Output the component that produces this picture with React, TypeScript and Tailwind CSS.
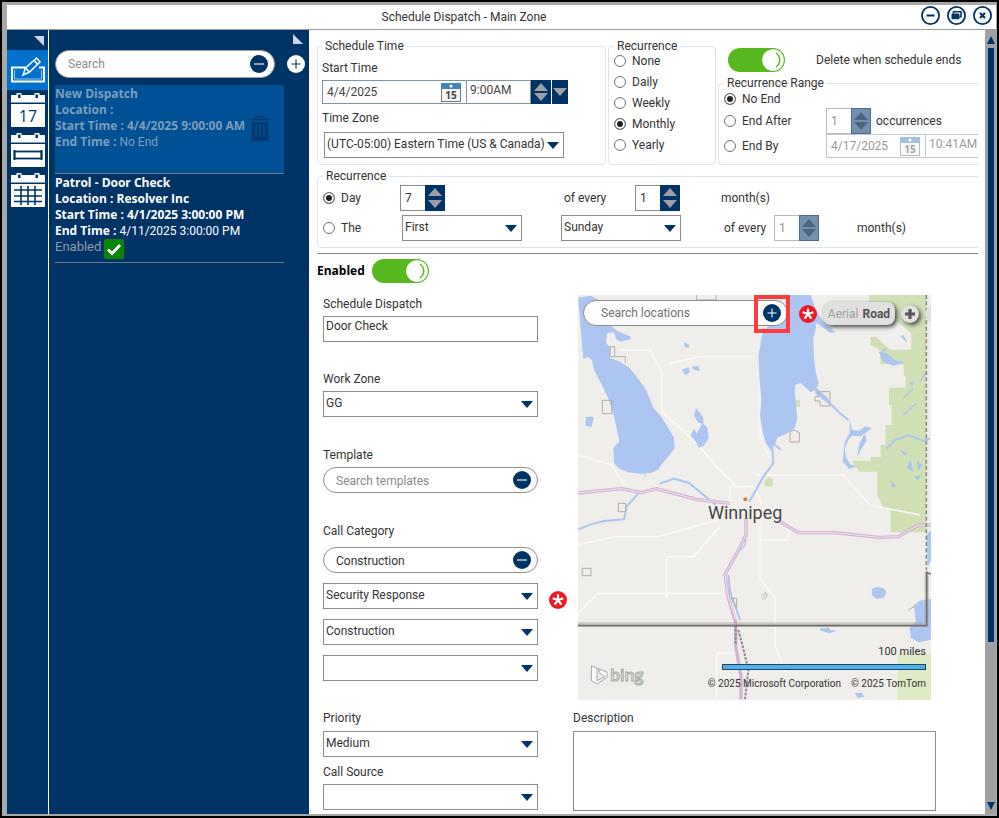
import { useState, type ReactNode } from 'react';
import { clsx } from 'clsx';

// ─── Small pieces ─────────────────────────────────────────────────────────────
function Caret({ className }: { className?: string }) {
  return (
    <svg viewBox="0 0 12 7" className={clsx('h-[7px] w-3', className)} aria-hidden="true">
      <path d="M0 0h12L6 7z" fill="currentColor" />
    </svg>
  );
}

function Select({ label, id, options, className }: { label?: string; id?: string; options: string[]; className?: string }) {
  return (
    <div className={clsx('relative', className)}>
      <select
        id={id}
        aria-label={label}
        className="block h-[26px] w-full appearance-none rounded-none border border-[#8c8c8c] bg-white pr-4 pb-[2px] pl-[2px] outline-none"
      >
        {options.map((o) => (
          <option key={o}>{o}</option>
        ))}
      </select>
      <Caret className="pointer-events-none absolute top-[10px] right-[5px] text-[#003366]" />
    </div>
  );
}

function SpinButtons({ className, disabled }: { className?: string; disabled?: boolean }) {
  return (
    <div
      className={clsx(
        'flex w-5 flex-col items-center justify-evenly',
        disabled ? 'border border-[#4a6c8e] bg-[#7391af] text-[#4a6683]' : 'bg-[#003366] text-[#9e9ea3]',
        className,
      )}
    >
      <button type="button" aria-label="Increase" disabled={disabled}>
        <svg viewBox="0 0 14 8" className="block h-2 w-[14px]"><path d="M0 8h14L7 0z" fill="currentColor" /></svg>
      </button>
      <button type="button" aria-label="Decrease" disabled={disabled}>
        <svg viewBox="0 0 14 8" className="block h-2 w-[14px]"><path d="M0 0h14L7 8z" fill="currentColor" /></svg>
      </button>
    </div>
  );
}

function Spinner({ label, value, disabled }: { label: string; value: string; disabled?: boolean }) {
  return (
    <div className="flex h-[26px] w-[45px] shrink-0">
      <input
        aria-label={label}
        defaultValue={value}
        disabled={disabled}
        className="w-[25px] border border-r-0 border-[#8c8c8c] bg-white pl-1 outline-none disabled:border-[#bababa] disabled:text-[#8f8f8f]"
      />
      <SpinButtons disabled={disabled} />
    </div>
  );
}

function Radio({ name, label, checked }: { name: string; label: string; checked?: boolean }) {
  return (
    <label className="flex items-center gap-[6px]">
      <input
        type="radio"
        name={name}
        defaultChecked={checked}
        className="size-3 appearance-none rounded-full border border-[#707070] bg-white checked:bg-[#222222] checked:shadow-[inset_0_0_0_2px_white]"
      />
      {label}
    </label>
  );
}

function Toggle({ label }: { label: string }) {
  const [on, setOn] = useState(true);
  return (
    <button
      type="button"
      role="switch"
      aria-checked={on}
      aria-label={label}
      onClick={() => setOn(!on)}
      className={clsx('flex h-6 w-[57px] items-center rounded-full', on ? 'justify-end bg-[#58b820]' : 'bg-[#9e9ea3]')}
    >
      <svg viewBox="0 0 24 24" className="size-6">
        <circle cx="12" cy="12" r="10.8" fill="#fff" />
        <path d="M15 5a8.500 8.500 0 0 1 0 14" fill="none" stroke="#58b820" strokeWidth="1.500" />
      </svg>
    </button>
  );
}

function DateIcon() {
  return (
    <svg viewBox="0 0 20 19" className="h-[19px] w-5 shrink-0" aria-hidden="true">
      <rect x="0.5" y="0.5" width="19" height="18" fill="#f4f4f4" stroke="#767676" />
      <rect width="20" height="6" fill="#4583b8" />
      <circle cx="10" cy="3" r="1.5" fill="#fff" />
      <text x="10" y="16" textAnchor="middle" fontSize="10" className="font-['Open_Sans',sans-serif] font-bold" fill="#444">15</text>
    </svg>
  );
}

function DateBox({ label, value, className }: { label: string; value: string; className?: string }) {
  return (
    <div className={clsx('flex h-6 shrink-0 items-center border border-[#7f93ab] bg-white pr-[5px] pl-1', className)}>
      <input aria-label={label} defaultValue={value} className="w-0 min-w-0 flex-1 outline-none" />
      <button type="button" aria-label="Open calendar">
        <DateIcon />
      </button>
    </div>
  );
}

function RoundIcon({ sign, className }: { sign: 'plus' | 'minus'; className?: string }) {
  return (
    <svg viewBox="0 0 18 18" className={clsx('size-[18px]', className)} aria-hidden="true">
      <circle cx="9" cy="9" r="9" fill="currentColor" />
      <path d={sign === 'plus' ? 'M4.500 9h9M9 4.500v9' : 'M4 9h10'} className="stroke-(--sign)" strokeWidth="1.100" />
    </svg>
  );
}

function Required() {
  return (
    <svg viewBox="0 0 18 18" className="size-[18px] shrink-0" role="img" aria-label="Required">
      <circle cx="9" cy="9" r="9" fill="#ed1c24" />
      <path d="M9 9V3.400M9 9l5.300-1.700M9 9l3.400 4.600M9 9l-3.400 4.600M9 9L3.700 7.300" stroke="#fff" strokeWidth="2.200" />
    </svg>
  );
}

function Group({ title, className, children }: { title: string; className?: string; children: ReactNode }) {
  return (
    <fieldset className={clsx('min-w-0 rounded border border-[#dbe5ee]', className)}>
      <legend className="px-[3px] leading-4">{title}</legend>
      {children}
    </fieldset>
  );
}

// ─── Title bar ────────────────────────────────────────────────────────────────
function TitleBar() {
  return (
    <header className="flex h-[25px] items-center border-b border-[#9a9a9a] bg-white pr-1">
      <h1 className="flex-1 text-center">Schedule Dispatch - Main Zone</h1>
      <div className="flex gap-[7px] pb-1 text-[#003366]">
        <button type="button" aria-label="Minimize">
          <svg viewBox="0 0 19 19" className="block size-[19px]" fill="none" stroke="currentColor">
            <circle cx="9.5" cy="9.5" r="8.6" strokeWidth="1.8" />
            <path d="M5.500 9.500h8" strokeWidth="2" />
          </svg>
        </button>
        <button type="button" aria-label="Restore">
          <svg viewBox="0 0 19 19" className="block size-[19px]" fill="none" stroke="currentColor">
            <circle cx="9.500" cy="9.500" r="8.600" strokeWidth="1.800" />
            <path d="M6.500 7.500V5.800h7.500v5h-1.500" strokeWidth="1.600" />
            <rect x="4.500" y="7.500" width="8" height="5.800" rx="1" fill="currentColor" stroke="none" />
          </svg>
        </button>
        <button type="button" aria-label="Close">
          <svg viewBox="0 0 19 19" className="block size-[19px]" fill="none" stroke="currentColor">
            <circle cx="9.500" cy="9.500" r="8.600" strokeWidth="1.800" />
            <path d="M7 7l5 5M12 7l-5 5" strokeWidth="2.200" />
          </svg>
        </button>
      </div>
    </header>
  );
}

// ─── Icon rail ────────────────────────────────────────────────────────────────
function CalendarFrame({ children }: { children: ReactNode }) {
  return (
    <svg viewBox="0 0 36 36" className="block size-9">
      <path d="M1 3h5.500V1h5v2h13V1h5v2H35v7.500H1z" fill="#fff" />
      <path d="M8 2.500h2.500V6H8zM25.500 2.500H28V6h-2.500z" fill="#003366" />
      <path d="M1 12h34v23H1z" fill="#fff" />
      {children}
    </svg>
  );
}

function Rail() {
  return (
    <nav className="flex w-[42px] shrink-0 flex-col items-center border-r border-white bg-[#003366]">
      <svg viewBox="0 0 10 10" className="mt-[6px] mr-1 mb-1 size-[10px] self-end" aria-hidden="true">
        <path d="M0 0h10v10z" fill="#ccd6e0" />
      </svg>
      <button type="button" aria-label="Schedule" className="flex h-10 w-full items-center justify-center bg-[#0072ce]">
        <svg viewBox="0 0 36 30" className="h-[30px] w-9" fill="none" stroke="#fff">
          <path d="M15 12.500H2v14h32v-14h-5" strokeWidth="2" />
          <path d="M4.500 15v9h27v-9" strokeWidth="0.600" />
          <path d="M13 20l2.500-7L26.500 3l3.500 4L19.500 17zM15.500 13l4 4M24 5.200l3.500 4" strokeWidth="1.500" />
        </svg>
      </button>
      <div className="flex flex-col items-center gap-1 pt-[2px]">
        <button type="button" aria-label="Day">
          <CalendarFrame>
            <text x="18" y="29.500" textAnchor="middle" fontSize="16" className="font-['Open_Sans',sans-serif]" fill="#003366">17</text>
          </CalendarFrame>
        </button>
        <button type="button" aria-label="Week">
          <CalendarFrame>
            <rect x="4.500" y="19.500" width="27" height="7" fill="none" stroke="#003366" strokeWidth="1.800" />
            <path d="M4.500 18v10M31.500 18v10" stroke="#003366" strokeWidth="1.800" />
          </CalendarFrame>
        </button>
        <button type="button" aria-label="Month">
          <CalendarFrame>
            <path d="M4 18h28M4 24h28M4 29.500h28M11 14v19M18 14v19M25 14v19" stroke="#003366" strokeWidth="1.600" />
          </CalendarFrame>
        </button>
      </div>
    </nav>
  );
}

// ─── Dispatch list ────────────────────────────────────────────────────────────
function DispatchList() {
  return (
    <aside className="w-[260px] shrink-0 bg-[#003366] pl-[6px] text-white">
      <svg viewBox="0 0 10 10" className="mt-1 mr-[6px] ml-auto size-[10px]" aria-hidden="true">
        <path d="M0 0v10h10z" fill="#ccd6e0" />
      </svg>
      <div className="mt-[6px] flex items-center gap-3">
        <label className="flex h-7 w-[220px] items-center rounded-full border border-[#9a9a9a] bg-white pr-[6px] pl-3">
          <input
            type="text"
            aria-label="Search dispatches"
            placeholder="Search"
            className="w-0 flex-1 text-[#222222] outline-none placeholder:text-[#8a8a8a]"
          />
          <RoundIcon sign="minus" className="text-[#003366] [--sign:#fff]" />
        </label>
        <button type="button" aria-label="Add dispatch">
          <RoundIcon sign="plus" className="block text-white [--sign:#003366]" />
        </button>
      </div>

      <ul className="mt-[7px] mr-[25px] font-['Open_Sans','Noto_Sans',sans-serif] leading-4 font-bold">
        <li className="flex h-[89px] items-start justify-between border-b border-[#6b7a88] bg-[#005096] pt-px text-[#7d9dbb]">
          <div className="whitespace-nowrap">
            <p>New Dispatch</p>
            <p>Location :</p>
            <p>Start Time : 4/4/2025 9:00:00 AM</p>
            <p>End Time : <span className="font-['Roboto',sans-serif] font-normal">No End</span></p>
          </div>
          <button type="button" aria-label="Delete dispatch" className="mt-[29px] mr-3">
            <svg viewBox="0 0 24 27" className="block h-[27px] w-6" fill="none" stroke="#00386f">
              <path d="M8 4V1.500h8V4M1 4.500h22" strokeWidth="1.500" />
              <path d="M3.500 7h17v19h-17z" fill="#00386f" stroke="none" />
              <path d="M8 9v13M12 9v13M16 9v13" stroke="#005096" strokeWidth="1.300" />
            </svg>
          </button>
        </li>
        <li className="border-b border-[#6b7a88] pt-px whitespace-nowrap">
          <p>Patrol - Door Check</p>
          <p>Location : Resolver Inc</p>
          <p>Start Time : 4/1/2025 3:00:00 PM</p>
          <p>End Time : <span className="font-['Roboto',sans-serif] font-normal">4/11/2025 3:00:00 PM</span></p>
          <p className="flex h-[23px] items-start gap-[3px] font-['Roboto',sans-serif] text-[13px] font-normal text-[#8f9aa6]">
            Enabled
            <svg viewBox="0 0 20 20" className="size-5" role="img" aria-label="Yes">
              <rect width="20" height="20" rx="2" fill="#078507" />
              <path d="M4 10.500l4 4 8-8.500" fill="none" stroke="#fff" strokeWidth="2.800" />
            </svg>
          </p>
        </li>
      </ul>
    </aside>
  );
}

// ─── Schedule settings ────────────────────────────────────────────────────────
function ScheduleTime() {
  return (
    <Group title="Schedule Time" className="w-[289px] shrink-0 pb-[6px] pl-1">
      <div className="mt-[6px] leading-4">Start Time</div>
      <div className="mt-1 flex text-[#444444]">
        <DateBox label="Start date" value="4/4/2025" className="w-[145px]" />
        <input
          aria-label="Start time"
          defaultValue="9:00AM"
          className="h-6 w-16 border border-l-0 border-[#7f93ab] bg-white pb-1 pl-[3px] outline-none"
        />
        <SpinButtons className="h-6" />
        <button type="button" aria-label="Pick start time" className="ml-px flex h-6 w-4 items-center justify-center bg-[#003366] text-[#9e9ea3]">
          <svg viewBox="0 0 14 8" className="h-2 w-[14px]"><path d="M0 0h14L7 8z" fill="currentColor" /></svg>
        </button>
      </div>
      <label htmlFor="time-zone" className="mt-[6px] mb-[6px] block leading-4">Time Zone</label>
      <Select id="time-zone" options={['(UTC-05:00) Eastern Time (US & Canada)']} className="ml-[2px] w-60" />
    </Group>
  );
}

function RecurrenceRange() {
  return (
    <div className="min-w-0 flex-1 overflow-hidden">
      <div className="flex items-center gap-[31px] pt-[10px] pl-[10px]">
        <Toggle label="Delete when schedule ends" />
        <span className="whitespace-nowrap">Delete when schedule ends</span>
      </div>
      <Group title="Recurrence Range" className="mt-[3px] rounded-r-none border-r-0 pb-[6px] pl-[5px]">
        <div className="h-[17px]"><Radio name="range" label="No End" checked /></div>
        <div className="flex h-[26px] items-center">
          <div className="w-[102px]"><Radio name="range" label="End After" /></div>
          <Spinner label="Occurrences" value="1" disabled />
          <span className="ml-[5px]">occurrences</span>
        </div>
        <div className="flex h-6 items-center">
          <div className="w-[102px] shrink-0"><Radio name="range" label="End By" /></div>
          <div className="flex min-w-0 flex-1 opacity-50">
            <DateBox label="End date" value="4/17/2025" className="w-[100px]" />
            <input
              aria-label="End time"
              defaultValue="10:41AM"
              className="h-6 w-0 flex-1 border-y border-[#7f93ab] bg-white pb-1 pl-[3px] outline-none"
            />
          </div>
        </div>
      </Group>
    </div>
  );
}

function RecurrencePattern() {
  return (
    <Group title="Recurrence" className="mt-[3px] rounded-r-none border-r-0 pl-[5px]">
      <div className="mt-px grid grid-cols-[77px_160px_75px_86px_1fr] items-center">
        <Radio name="pattern" label="Day" checked />
        <Spinner label="Day of month" value="7" />
        <span className="pl-1">of every</span>
        <Spinner label="Every months" value="1" />
        <span>month(s)</span>
      </div>
      <div className="mt-1 mb-[6px] flex items-center">
        <div className="w-[79px]"><Radio name="pattern" label="The" /></div>
        <Select label="Week of month" options={['First']} className="w-[120px]" />
        <Select label="Weekday" options={['Sunday']} className="ml-[39px] w-[120px]" />
        <span className="ml-[43px] w-[50px]">of every</span>
        <Spinner label="Every months" value="1" disabled />
        <span className="ml-[38px]">month(s)</span>
      </div>
    </Group>
  );
}

// ─── Map ──────────────────────────────────────────────────────────────────────
function MapArt() {
  return (
    <svg viewBox="24 30 1059 1215" preserveAspectRatio="xMidYMid slice" className="absolute inset-0 size-full" aria-hidden="true">
      <rect x="24" y="30" width="1059" height="1215" fill="#efeeea" />
      {/* parks */}
      <g fill="#d0e0b4">
        <path d="M898 30h171v712H962V672h-20l-20-40v-72h-55l-20-32h55v-12h30v-36h15v-60h18v-60h-8v-52h50v-34h-6v-36h-70v-40l-10-8-20-10v-24h18l40 38h65v-50l-50-40-40-40h-35z" />
        <path d="M600 140l45-30 5 30-28 30-18-8zM672 345h18v20h-18zM582 590l15-14 12 8-3 22-22-4z" />
        <path d="M983 1105h100v140H983z" fill="#deebc4" />
      </g>
      {/* faint roads */}
      <g fill="none" stroke="#f9f8f6" strokeWidth="5">
        <path d="M150 195h90l35 65v120l100 90 70 80 60 60M300 235l90-20h160M570 240v220l30 60M560 570h260l80 90 150 30M24 510l100 30 40 60M24 780l110-25h130l180-50M290 940V815h80l80-90M24 985l60-60h370M570 700v180l45 60v140l30 80M440 1240v-135h60M570 765h80l15-50M480 655v-50h70l25 50" />
      </g>
      {/* lakes */}
      <g fill="#acc6f1">
        <path d="M24 38l38-6 40 22 14 14-22 10 16 22-10 14 20 6 22 18 38 16 2 8-30 8-12-6-8-22-20 2-4 30 14 14-2 30 30 12 28 18 30 38 22 32 20 50 24 28 18 28 20 34 2 32-18 24-16 18-16 22-22 10-30 2-38-4-28-12-14-16-2-46 18-18-6-30-10-46-16-52-22-46-22-40-6-30-12-10-14 6z" />
        <path d="M660 30h62l14 40 2 58-8 30 2 62 6 46 8 30-10 18-14 8-30-28-16 6-2 18 4 40 4 42-8 30-28 18-24 10-8 22-12 14-14-20-10-32-8-50 4-50-6-62-2-70 10-60 18-26 6-22 36-20 18-22z" />
        <path d="M728 60l30 48 40 36-20-2-44-32zM378 368l22 30v20l-16-6-12-20zM372 430l8 16 18-32 14 14 4 32-16 24-14 4-10-20-14-16zM342 172l14 6 2 10-14-2zM335 255l20-8 5 15-14 8zM365 245l20-3 4 15-16-2zM48 395h22v10l-6 22-18-6zM190 518l44 2 16-22 16-6-8 34-30 8-3 44-8-46z" />
        <path d="M735 305l40 35 5 20-44-34zM838 400l8 34 20 4 20-14 20 6-20 14-14 10-26-2-10 10-12 30 4 24 12 22 20 6-22 8-20-22 6-58 16-30-2-40zM884 445l6 22-16 24-12 24 6-38zM926 200l24 4 24 22 34 6-40 10-30-14z" />
        <path d="M905 912l16-6 20 4 8 12-8 16-22 4-14-12zM1032 960l20-14 31-4v122l-36 8-24-14-4-30 18-16zM750 1030h20l2-8 8 12 20 4-22 7-26-8zM855 1225l20-2 8 12-20 3z" />
        <path d="M960 585l18 18-10 5zM1010 548l12-26 8 40zM1040 525l18 16-14 18zM1030 575l24-5-8 16zM1070 750l13-15v90l-10 20zM990 495l24 10-9 8zM1000 150l14 24-22-18zM1020 295l14-8-8 18z" />
      </g>
      {/* rivers */}
      <g fill="none" stroke="#acc6f1" strokeWidth="6">
        <path d="M600 470l8 30 2 35-30 40-25 45-18 30M615 480l18 14M775 350l30 30 30 25M270 596l42-15 45 13 30 25 50 40M205 625l-35 40-8 38-60 5-40 10-38 16M475 870l5 50 20 55 10 30M950 490l25-25 40-15 45 18 20-8M905 60l50 45" />
        <path d="M1000 340l30-30M930 205l20-15M1000 390l40-35M1050 290l20-30M530 690l-4 90-30 30" strokeWidth="4" />
      </g>
      {/* highways */}
      <g fill="none" strokeLinejoin="round">
        <path
          d="M24 624l130-13 60 12 45-12 120 32 100 12M630 710l55 33h110l130 14 60-2 60-35h38M528 700v50l-25 50-38 68 10 70 22 75v70l16 90v70"
          stroke="#d3b3d3"
          strokeWidth="10"
        />
        <path
          d="M24 624l130-13 60 12 45-12 120 32 100 12M630 710l55 33h110l130 14 60-2 60-35h38M528 700v50l-25 50-38 68 10 70 22 65"
          stroke="#f3e6f3"
          strokeWidth="3"
        />
        <path d="M505 1035l16 60 14 60-10 90M497 1020v60" stroke="#8f8596" strokeWidth="6" strokeDasharray="8 4" />
      </g>
      {/* town outlines */}
      <g fill="none" stroke="#b5aca5" strokeWidth="3">
        <path d="M380 30v15h58V30M120 185v30h46v18M120 185h14v30M97 346h28v40H97zM735 335h12v-15h33v43h-30v-15h-15zM660 440l12-5 16 8v28h-28zM145 655h22v25h-22zM37 850h26v22H37zM483 940h17v30zM575 935l12-12 4 10-14 12M1015 975l20-12" />
      </g>
      {/* province border */}
      <path d="M1069 30v825" stroke="#8b8b85" strokeWidth="5" strokeDasharray="12 7" />
      <path d="M24 1018h1046V862" fill="none" stroke="#a5a5a0" strokeWidth="13" opacity="0.5" />
      <path d="M24 1022h1046V862l13 6" fill="none" stroke="#6f6f6b" strokeWidth="5" />
      <circle cx="526" cy="643" r="6" fill="#e0763a" />
      {/* bing mark */}
      <path
        d="M64 1142l17 7v38l24-12-14-8-6-16 26 10v16l-30 20-17-10z"
        fill="#fafafa"
        stroke="#a8a8a8"
        strokeWidth="3"
        strokeLinejoin="round"
      />
    </svg>
  );
}

function LocationMap() {
  return (
    <div className="relative mx-[5px] h-[405px] overflow-hidden">
      <MapArt />
      <span className="absolute top-[204px] left-[130px] text-lg text-[#444444] [text-shadow:0_0_2px_white]">Winnipeg</span>
      <span className="absolute top-[370px] left-8 font-['Open_Sans',sans-serif] text-base leading-5 font-semibold text-[#efefef] [-webkit-text-stroke:1px_#a8a8a8]">bing</span>

      <label className="absolute top-[5px] left-[5px] flex h-[26px] w-[205px] items-center rounded-full border border-[#8c8c8c] bg-white pr-[6px] pl-[17px]">
        <input type="text" aria-label="Search locations" placeholder="Search locations" className="w-0 flex-1 outline-none placeholder:text-[#707070]" />
        <RoundIcon sign="plus" className="text-[#003366] [--sign:#fff]" />
      </label>
      <div className="absolute top-0 left-[176px] h-[38px] w-9 border-4 border-[#ff3b3b]" />

      <div className="absolute top-[7px] left-[221px] flex items-center gap-[6px]">
        <Required />
        <div className="flex h-[23px] w-[72px] shrink-0 items-center justify-center gap-1 rounded-lg bg-[#e0e0de] shadow-[2px_2px_4px_#444444]">
          <button type="button" className="text-[#a0a0a0]">Aerial</button>
          <button type="button" className="font-bold text-[#555555]">Road</button>
        </div>
        <button type="button" aria-label="Zoom in" className="flex size-[18px] shrink-0 items-center justify-center rounded-full bg-[#e0e0de] shadow-[2px_2px_4px_#444444]">
          <svg viewBox="0 0 10 10" className="size-[10px]"><path d="M5 0v10M0 5h10" stroke="#555" strokeWidth="3.200" /></svg>
        </button>
        <button type="button" aria-label="Zoom out" className="size-[18px] shrink-0 rounded-full bg-[#e0e0de]" />
      </div>

      <div className="absolute right-[5px] bottom-[8px] flex flex-col items-end leading-4 whitespace-nowrap">
        <span className="text-[11px]">100 miles</span>
        <div className="mt-1 h-[6px] w-[204px] border border-[#33414d] bg-[#45b4f5]" />
        <div className="mt-[6px] flex gap-[10px] text-[10px]">
          <span>© 2025 Microsoft Corporation</span>
          <span>© 2025 TomTom</span>
        </div>
      </div>
    </div>
  );
}

// ─── Dispatch form ────────────────────────────────────────────────────────────
function PillSearch({ id, value, placeholder }: { id: string; value?: string; placeholder?: string }) {
  return (
    <div className="flex h-[26px] w-[215px] items-center rounded-full border border-[#8c8c8c] bg-white pr-[6px] pl-3">
      <input
        id={id}
        type="text"
        defaultValue={value}
        placeholder={placeholder}
        className="w-0 flex-1 pt-[2px] outline-none placeholder:text-[#8a8a8a]"
      />
      <RoundIcon sign="minus" className="text-[#003366] [--sign:#fff]" />
    </div>
  );
}

function DispatchForm() {
  return (
    <div className="flex pt-3 pr-[49px] pb-[3px] pl-[14px]">
      <div className="w-[250px] shrink-0 pt-px">
        <label htmlFor="dispatch" className="mb-1 block leading-4">Schedule Dispatch</label>
        <input
          id="dispatch"
          defaultValue="Door Check"
          className="block h-[26px] w-[215px] border border-[#8c8c8c] bg-white pb-[6px] pl-[2px] outline-none"
        />
        <label htmlFor="zone" className="mt-[29px] mb-1 block leading-4">Work Zone</label>
        <Select id="zone" options={['GG']} className="w-[215px]" />
        <label htmlFor="template" className="mt-[30px] mb-1 block leading-4">Template</label>
        <PillSearch id="template" placeholder="Search templates" />
        <label htmlFor="category" className="mt-[30px] mb-2 block leading-4">Call Category</label>
        <PillSearch id="category" value="Construction" />
        <div className="mt-[10px] flex items-end gap-[11px]">
          <Select label="Call category level 1" options={['Security Response']} className="w-[215px]" />
          <Required />
        </div>
        <Select label="Call category level 2" options={['Construction']} className="mt-[10px] w-[215px]" />
        <Select label="Call category level 3" options={['']} className="mt-[10px] w-[215px]" />
        <label htmlFor="priority" className="mt-[29px] mb-[5px] block leading-4">Priority</label>
        <Select id="priority" options={['Medium']} className="w-[215px]" />
        <label htmlFor="source" className="mt-[7px] mb-1 block leading-4">Call Source</label>
        <Select id="source" options={['']} className="w-[215px]" />
      </div>
      <div className="flex min-w-0 flex-1 flex-col">
        <LocationMap />
        <label htmlFor="description" className="mt-[10px] mb-[5px] block leading-4">Description</label>
        <textarea id="description" className="block h-20 w-full resize-none border border-[#8c8c8c] bg-white p-1 outline-none" />
      </div>
    </div>
  );
}

function ScrollBar() {
  return (
    <div className="flex w-[11px] shrink-0 flex-col items-center bg-[#a0a0a5] text-[#003366]" aria-hidden="true">
      <svg viewBox="0 0 8 8" className="mt-[6px] size-2"><path d="M0 8h8L4 0z" fill="currentColor" /></svg>
      <div className="mt-1 h-[594px] w-[6px] bg-[#003366]" />
      <svg viewBox="0 0 8 8" className="mt-auto mb-1 size-2"><path d="M0 0h8L4 8z" fill="currentColor" /></svg>
    </div>
  );
}

export default function App() {
  return (
    <div className="flex min-h-screen flex-col border-2 border-black bg-[#a8a8a8] pt-[3px] pr-px pb-[2px] pl-[5px] font-['Roboto','Open_Sans',sans-serif] text-xs text-[#333333]">
      <TitleBar />
      <div className="flex flex-1">
        <Rail />
        <DispatchList />
        <main className="min-w-0 flex-1 bg-white">
          <div className="pt-2 pr-[7px] pl-2">
            <div className="flex items-stretch gap-[2px]">
              <ScheduleTime />
              <Group title="Recurrence" className="w-[108px] shrink-0 pl-[5px]">
                <div className="-mt-1 grid auto-rows-[21px] items-center">
                  <Radio name="recurrence" label="None" />
                  <Radio name="recurrence" label="Daily" />
                  <Radio name="recurrence" label="Weekly" />
                  <Radio name="recurrence" label="Monthly" checked />
                  <Radio name="recurrence" label="Yearly" />
                </div>
              </Group>
              <RecurrenceRange />
            </div>
            <RecurrencePattern />
            <hr className="mt-[5px] border-[#8c8c8c]" />
            <div className="mt-[5px] flex items-center gap-[7px] font-['Open_Sans','Noto_Sans',sans-serif] font-bold text-black">
              Enabled
              <Toggle label="Enabled" />
            </div>
          </div>
          <DispatchForm />
        </main>
        <ScrollBar />
      </div>
    </div>
  );
}
